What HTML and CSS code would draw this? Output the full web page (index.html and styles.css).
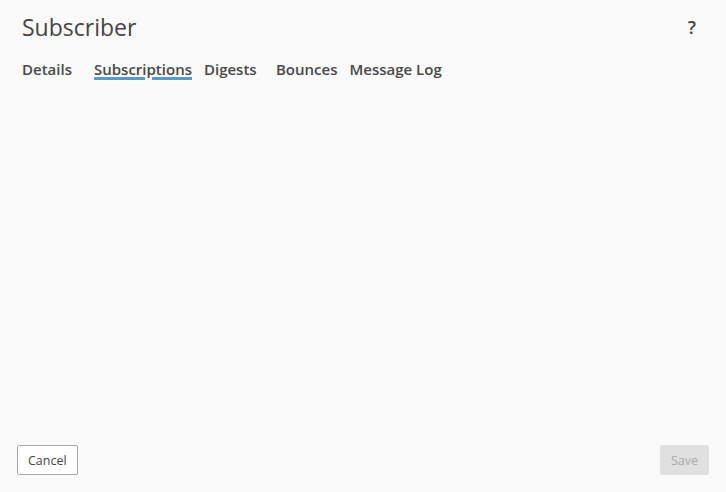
FILE: index.html
```html
<!DOCTYPE html>
<html>
<head>
<meta charset="utf-8">
<link rel="stylesheet" href="styles.css">
</head>
<body>
<div class="dialog">
  <header class="header">
    <h1 class="title">Subscriber</h1>
    <span class="help">?</span>
  </header>
  <nav class="tabs">
    <span class="tab">Details</span>
    <span class="tab active">Subscriptions</span>
    <span class="tab">Digests</span>
    <span class="tab">Bounces</span>
    <span class="tab">Message Log</span>
  </nav>
  <main class="content"></main>
  <footer class="footer">
    <button class="btn cancel">Cancel</button>
    <button class="btn save" disabled>Save</button>
  </footer>
</div>
</body>
</html>
```
FILE: styles.css
```css
html, body {
  margin: 0;
  padding: 0;
  height: 100%;
  background: #fafafa;
  font-family: "Open Sans", "Noto Sans", sans-serif;
  color: #444;
}
.dialog {
  display: flex;
  flex-direction: column;
  height: 100%;
}
.header {
  display: flex;
  justify-content: space-between;
  align-items: center;
  padding: 11px 30px 0 22px;
}
.title {
  margin: 0;
  font-size: 23px;
  font-weight: 400;
  line-height: 32px;
  color: #444;
}
.help {
  font-size: 18px;
  font-weight: 600;
  color: #444;
}
.tabs {
  display: flex;
  padding: 15px 22px 0;
}
.tab {
  min-width: 60px;
  margin-right: 12px;
  font-size: 15px;
  font-weight: 600;
  line-height: 22px;
  color: #484848;
}
.tab.active {
  text-decoration: underline;
  text-decoration-color: #4a9fd0;
  text-decoration-thickness: 2.5px;
  text-underline-offset: 2px;
  text-decoration-skip-ink: auto;
}
.content {
  flex: 1;
}
.footer {
  display: flex;
  justify-content: space-between;
  padding: 0 17px 17px;
}
.btn {
  font-family: "Open Sans", "Noto Sans", sans-serif;
  font-size: 12.5px;
  height: 30px;
  border-radius: 2px;
  padding: 0 10px;
}
.cancel {
  background: #fff;
  border: 1px solid #a8a8a8;
  color: #444;
}
.save {
  background: #e0e0e0;
  border: 1px solid #e0e0e0;
  color: #a9a9a9;
  width: 49px;
}
```
